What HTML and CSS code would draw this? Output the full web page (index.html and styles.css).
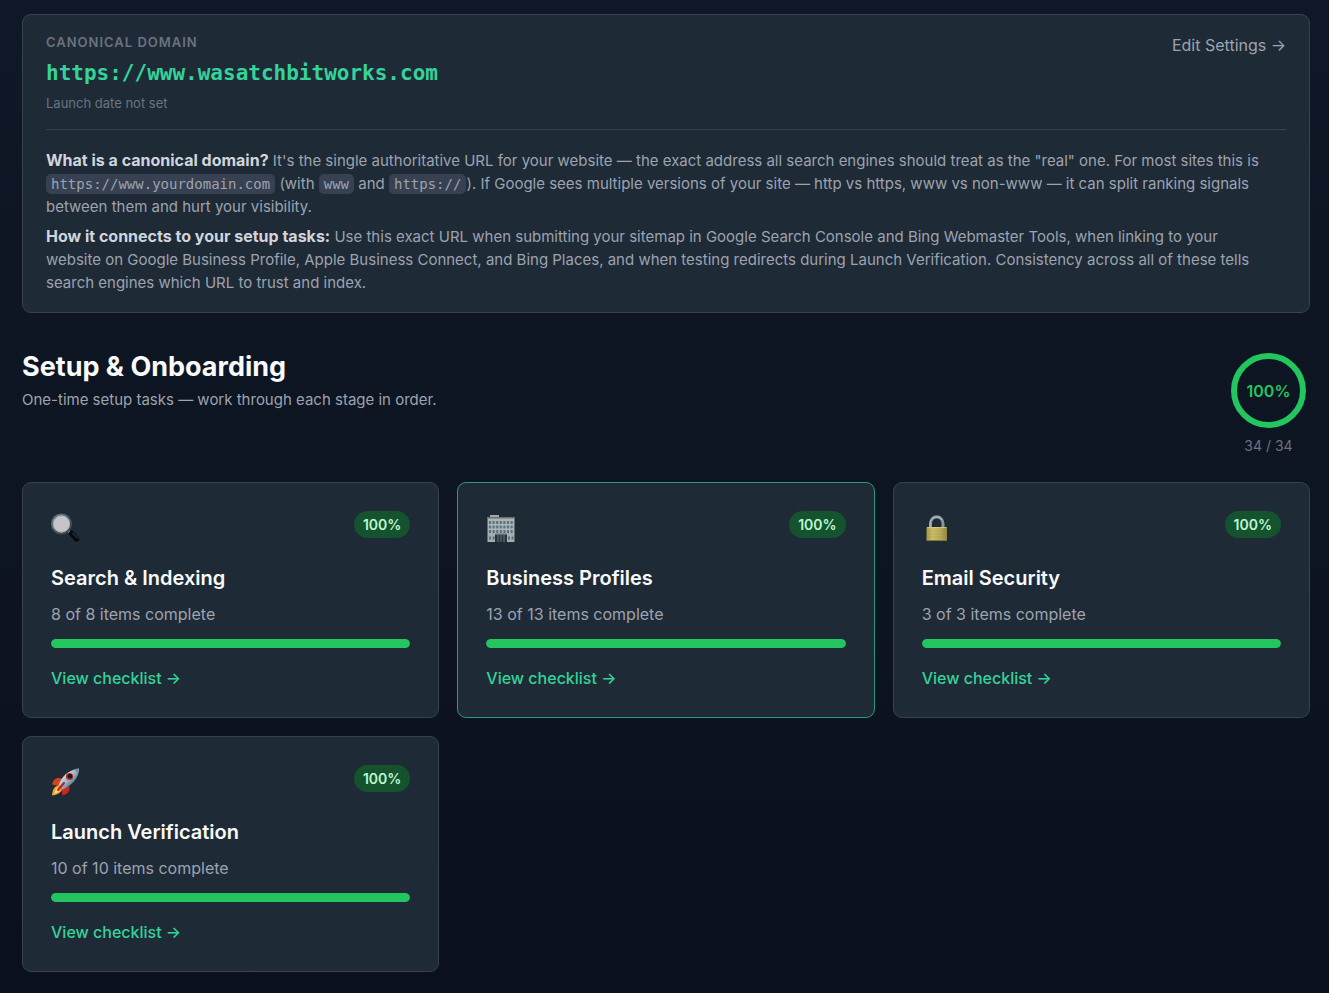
FILE: index.html
```html
<!DOCTYPE html>
<html lang="en">
<head>
  <meta charset="UTF-8" />
  <meta name="viewport" content="width=device-width, initial-scale=1" />
  <title>Setup &amp; Onboarding</title>
  <link rel="stylesheet" href="styles.css">
</head>
<body>

  <main class="page">
    <section class="domain">
      <div class="domain-head">
        <div>
          <div class="domain-label">Canonical Domain</div>
          <div class="domain-url">https://www.wasatchbitworks.com</div>
          <div class="domain-date">Launch date not set</div>
        </div>
        <a class="edit-link" href="#settings">Edit Settings →</a>
      </div>
      <div class="domain-help">
        <p><strong>What is a canonical domain?</strong> It's the single authoritative URL for your website — the exact address all search engines should treat as the "real" one. For most sites this is <code>https://www.yourdomain.com</code> (with <code>www</code> and <code>https://</code>). If Google sees multiple versions of your site — http vs https, www vs non-www — it can split ranking signals <br>between them and hurt your visibility.</p>
        <p><strong>How it connects to your setup tasks:</strong> Use this exact URL when submitting your sitemap in Google Search Console and Bing Webmaster Tools, when linking to your <br>website on Google Business Profile, Apple Business Connect, and Bing Places, and when testing redirects during Launch Verification. Consistency across all of these tells <br>search engines which URL to trust and index.</p>
      </div>
    </section>

    <header class="section-head">
      <div>
        <h1>Setup &amp; Onboarding</h1>
        <p>One-time setup tasks — work through each stage in order.</p>
      </div>
      <div class="overall">
        <div class="ring">100%</div>
        <div class="ring-count">34 / 34</div>
      </div>
    </header>

    <div class="stages">
      <article class="card">
        <div class="card-top">
          <svg class="icon" viewBox="0 0 30 30" aria-hidden="true">
            <defs>
              <linearGradient id="rim" x1="0" y1="0" x2="1" y2="1">
                <stop offset="0" stop-color="#6c7a84" />
                <stop offset="1" stop-color="#33414c" />
              </linearGradient>
            </defs>
            <path d="M17 17.500l3 3" stroke="#8b979f" stroke-width="2.500" />
            <path d="M20.500 20.500l5 5.500" stroke="#070b10" stroke-width="5.500" stroke-linecap="round" />
            <path d="M21.500 20l5 5.200" stroke="#3d4a56" stroke-width="1" stroke-linecap="round" />
            <circle cx="10.500" cy="11" r="9.500" fill="#c5c5c9" stroke="url(#rim)" stroke-width="2" />
            <circle cx="10.500" cy="11" r="8.200" fill="none" stroke="#9da4aa" stroke-width="0.700" />
          </svg>
          <span class="badge">100%</span>
        </div>
        <h2>Search &amp; Indexing</h2>
        <p>8 of 8 items complete</p>
        <div class="bar"><div class="bar-fill" style="width: 100%"></div></div>
        <a class="card-link" href="#search">View checklist →</a>
      </article>

      <article class="card active">
        <div class="card-top">
          <svg class="icon" viewBox="0 0 30 30" aria-hidden="true">
            <rect x="4" y="2" width="9" height="3" fill="#a3aaab" />
            <rect x="1.500" y="4.500" width="27" height="24.500" fill="#a5adaf" />
            <path d="M1 4.700h28" stroke="#746e6c" stroke-width="1.500" />
            <path d="M3 9.500h25M3 14h25M3 18.500h25M3 25h6M22 25h6" stroke="#557481" stroke-width="3" stroke-dasharray="2 1.600" />
            <path d="M2 7h26M2 11.700h26M2 16.200h26" stroke="#c0c4c3" stroke-width="0.700" />
            <rect x="9" y="21" width="12" height="8" fill="#27343d" />
            <path d="M9 21.300h12" stroke="#706c6a" stroke-width="1.500" />
            <path d="M12 22v7M15 22v7M18 22v7" stroke="#8c9697" stroke-width="0.700" />
          </svg>
          <span class="badge">100%</span>
        </div>
        <h2>Business Profiles</h2>
        <p>13 of 13 items complete</p>
        <div class="bar"><div class="bar-fill" style="width: 100%"></div></div>
        <a class="card-link" href="#profiles">View checklist →</a>
      </article>

      <article class="card">
        <div class="card-top">
          <svg class="icon" viewBox="0 0 30 30" aria-hidden="true">
            <defs>
              <linearGradient id="brass">
                <stop offset="0" stop-color="#a69847" />
                <stop offset="0.300" stop-color="#cdbd6b" />
                <stop offset="0.700" stop-color="#b8a856" />
                <stop offset="1" stop-color="#938444" />
              </linearGradient>
            </defs>
            <path d="M8.500 15V10.500a6.200 6.700 0 0 1 12.500 0V15" fill="none" stroke="#8b929d" stroke-width="3" />
            <path d="M8.100 15V10.500a6.600 7 0 0 1 12 -3.500" fill="none" stroke="#c2c7cf" stroke-width="1" />
            <rect x="4.500" y="14" width="20.500" height="14" rx="1" fill="url(#brass)" />
            <path d="M5 14.500h19.500" stroke="#ded085" stroke-width="0.700" />
            <path d="M5 18h19.500M5 21h19.500M5 24h19.500" stroke="#a39448" stroke-width="0.500" opacity="0.600" />
            <path d="M5 27.500h19.500" stroke="#857639" />
          </svg>
          <span class="badge">100%</span>
        </div>
        <h2>Email Security</h2>
        <p>3 of 3 items complete</p>
        <div class="bar"><div class="bar-fill" style="width: 100%"></div></div>
        <a class="card-link" href="#email">View checklist →</a>
      </article>

      <article class="card">
        <div class="card-top">
          <svg class="icon" viewBox="0 0 30 30" aria-hidden="true">
            <defs>
              <linearGradient id="hull" x1="0" y1="0" x2="1" y2="1">
                <stop offset="0.250" stop-color="#dce5ed" />
                <stop offset="0.550" stop-color="#91aabc" />
                <stop offset="0.800" stop-color="#3e5872" />
              </linearGradient>
            </defs>
            <path d="M10.500 11.500c-4-1.500-8 0-9.500 6l7 1.500z" fill="#d64122" />
            <path d="M18 19c1.500 4-.5 8-6.500 9.500l-1-7z" fill="#cf2720" />
            <path d="M7.500 18.500c-4 .5-6 4-6.500 10 5-.5 9-2.500 10-6.500z" fill="#f5a332" />
            <path d="M7.500 20.500c-2.500 1-3.500 3-4 6 3-.5 5-2 5.500-4.500z" fill="#ffe477" />
            <path d="M7.500 18.500c2.500-8 9-15.500 20.500-17 0 9.500-7.500 17.500-16.500 21z" fill="url(#hull)" />
            <path d="M23 2.700c2-.8 3.500-1 5-1.200 0 2-.3 3.500-1 5z" fill="#7890a2" />
            <circle cx="18.500" cy="9.500" r="3.600" fill="#b92929" />
            <circle cx="19" cy="9.300" r="2.300" fill="#151c26" />
            <path d="M7 23l6-7" stroke="#ae231e" stroke-width="2" stroke-linecap="round" />
          </svg>
          <span class="badge">100%</span>
        </div>
        <h2>Launch Verification</h2>
        <p>10 of 10 items complete</p>
        <div class="bar"><div class="bar-fill" style="width: 100%"></div></div>
        <a class="card-link" href="#launch">View checklist →</a>
      </article>
    </div>
  </main>

</body>
</html>
```
FILE: styles.css
```css
* {
  box-sizing: border-box;
}
body {
  margin: 0;
  min-height: 100vh;
  background: linear-gradient(#0f1826, #0b101e);
  color: #9ca3af;
  font-family: Inter, sans-serif;
  font-size: 16px;
  line-height: 24px;
}
h1, h2, p {
  margin: 0;
}
a {
  text-decoration: none;
}
.page {
  padding: 14px 19px 21px 22px;
}
.domain {
  padding: 18px 23px;
  background-color: #1f2a37;
  border: 1px solid #374151;
  border-radius: 9px;
}
.domain-head {
  display: flex;
  justify-content: space-between;
  align-items: flex-start;
  padding-bottom: 16px;
  border-bottom: 1px solid #374151;
}
.domain-label {
  color: #6b7280;
  font-size: 13px;
  font-weight: 600;
  line-height: 18px;
  letter-spacing: 1px;
  text-transform: uppercase;
}
.domain-url {
  margin: 6px 0 4px;
  color: #34d399;
  font-family: "DejaVu Sans Mono", monospace;
  font-size: 21px;
  font-weight: bold;
  line-height: 32px;
}
.domain-date {
  color: #6b7280;
  font-size: 13px;
  line-height: 20px;
}
.edit-link {
  color: #9ca3af;
}
.domain-help {
  padding-top: 19px;
  font-size: 15px;
  line-height: 23px;
}
.domain-help p + p {
  margin-top: 7px;
}
.domain-help strong {
  color: #d1d5db;
  font-size: 16px;
}
code {
  padding: 2px 5px;
  background-color: #374151;
  border-radius: 5px;
  font-family: "DejaVu Sans Mono", monospace;
  font-size: 14px;
  line-height: 16px;
}
.section-head {
  display: flex;
  justify-content: space-between;
  align-items: flex-start;
  margin: 36px 0 26px;
}
.section-head p {
  font-size: 15px;
}
h1 {
  margin-bottom: 3px;
  color: #f9fafb;
  font-size: 27px;
  font-weight: 700;
  line-height: 36px;
}
.overall {
  display: flex;
  flex-direction: column;
  align-items: center;
  gap: 8px;
  padding: 4px 4px 0 0;
}
.ring {
  display: flex;
  justify-content: center;
  align-items: center;
  width: 75px;
  height: 75px;
  border: 6px solid #22c55e;
  border-radius: 50%;
  color: #22c55e;
  font-weight: 600;
}
.ring-count {
  color: #6b7280;
  font-size: 14px;
  line-height: 20px;
}
.stages {
  display: grid;
  grid-template-columns: repeat(3, 1fr);
  gap: 18px;
}
.card {
  padding: 28px 28px 27px;
  background-color: #1f2a37;
  border: 1px solid #374151;
  border-radius: 9px;
}
.card.active {
  border-color: #2a9a7b;
}
.card-top {
  display: flex;
  justify-content: space-between;
  align-items: flex-start;
  height: 37px;
  margin-bottom: 16px;
}
.icon {
  width: 30px;
  height: 30px;
  margin-top: 2px;
}
.badge {
  padding: 0 9px;
  background-color: #14532d;
  border-radius: 14px;
  color: #bbf7d0;
  font-size: 14px;
  font-weight: 600;
  line-height: 27px;
}
h2 {
  margin-bottom: 10px;
  color: #f9fafb;
  font-size: 20px;
  font-weight: 600;
  line-height: 28px;
}
.bar {
  height: 9px;
  margin: 13px 0 17px;
  background-color: #374151;
  border-radius: 5px;
  overflow: hidden;
}
.bar-fill {
  height: 100%;
  background-color: #22c55e;
  border-radius: 5px;
}
.card-link {
  display: block;
  padding-top: 1px;
  color: #34d399;
  font-weight: 500;
}
@media (max-width: 900px) {
  .stages {
    grid-template-columns: 1fr;
  }
  .domain-help br {
    display: none;
  }
}
```
